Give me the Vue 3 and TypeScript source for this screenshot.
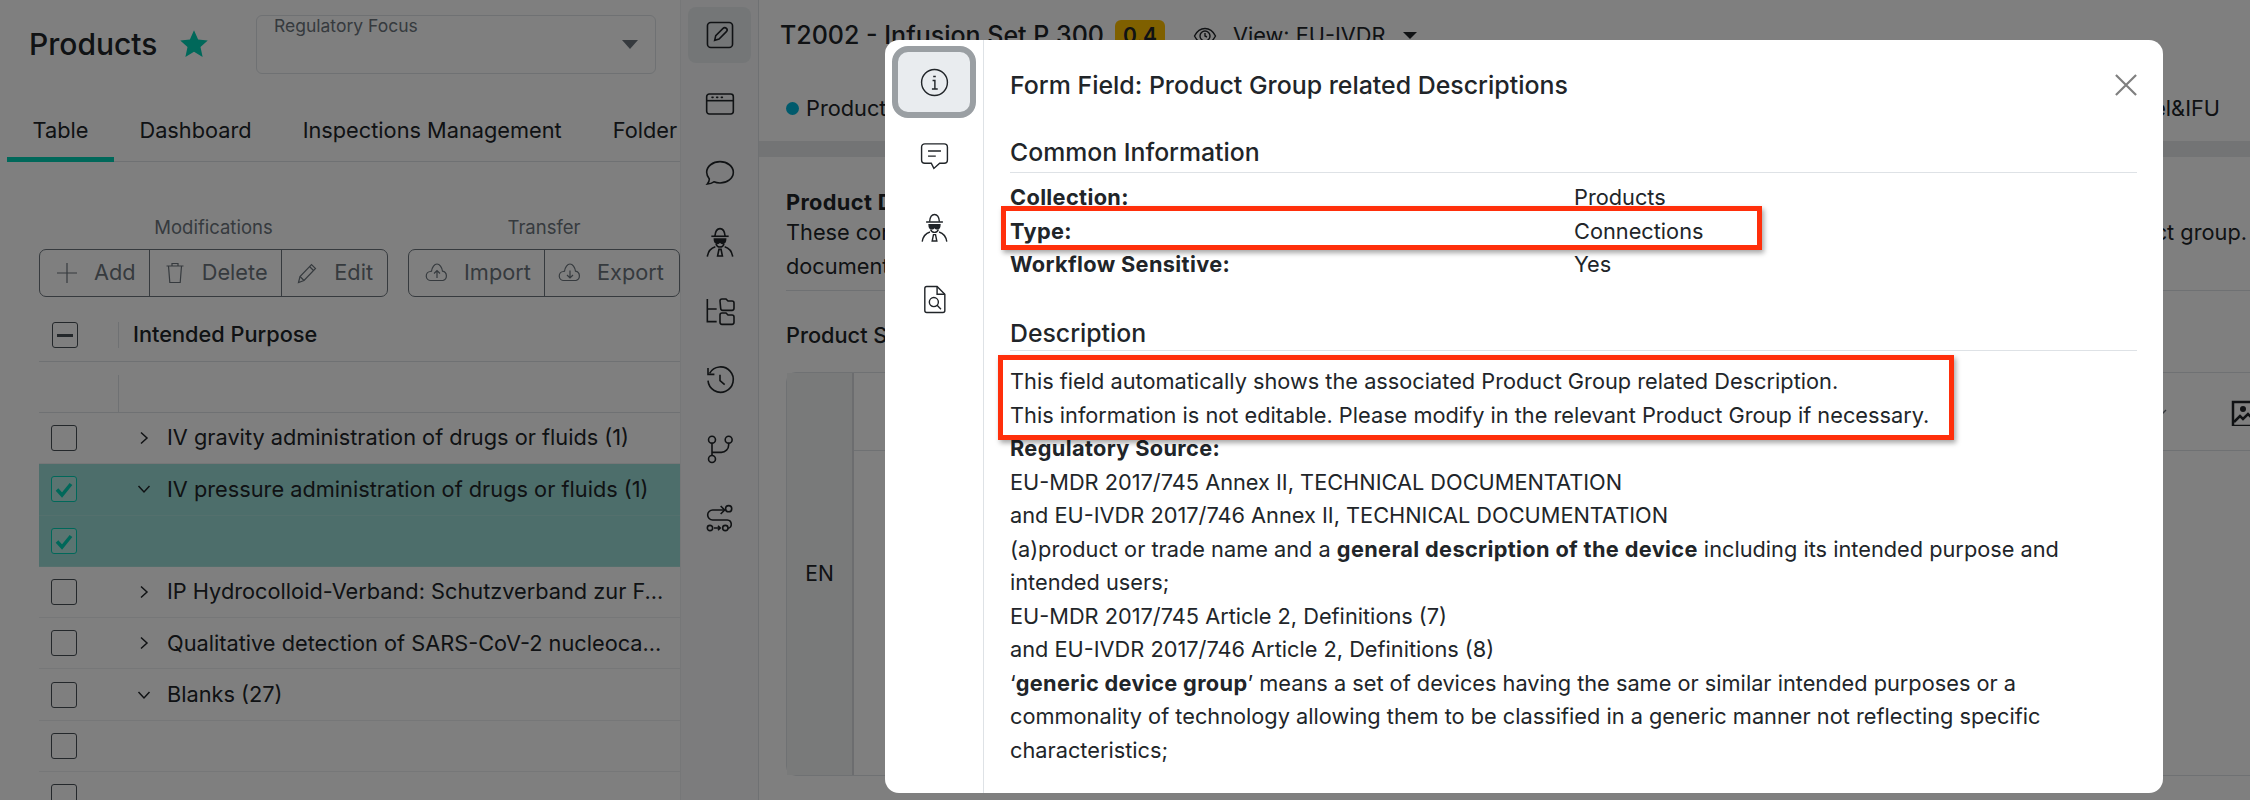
<script setup lang="ts">
const icons: Record<string, string> = {
  edit: '<rect x="2.600" y="2.600" width="18.800" height="18.800" rx="2.500"/><path d="M8 16l.8-3.500 5.500-5.500a1.600 1.600 0 0 1 2.500 2.500l-5.500 5.500z"/>',
  browser: '<rect x="2" y="4.500" width="20" height="15" rx="2"/><path d="M2 9.500h20"/><path d="M6 7h.8M9.500 7h.8M13 7h.8" stroke-linecap="round"/>',
  chat: '<path d="M12 3.500c5.500 0 10 3.500 10 8s-4.500 8-10 8c-1.700 0-3.200-.3-4.600-.9-1.400 1-3 1.500-4.900 1.700 1-1.200 1.500-2.500 1.500-3.800C2.800 15 2 13.300 2 11.500c0-4.500 4.500-8 10-8z"/>',
  spy: '<path d="M8.200 7.500c.3-3.500 1.600-5.500 3.800-5.500s3.500 2 3.800 5.500"/><path d="M5.500 7.700h13"/><path d="M7.800 9.800h8.400c0 2.300-1 3.200-2.300 3.200-1 0-1.300-.9-1.900-.9s-.9.900-1.900.9c-1.300 0-2.300-.9-2.300-3.200z" fill="currentColor"/><path d="M9 13.500c.5 1.500 1.600 2.300 3 2.300s2.500-.8 3-2.300"/><path d="M8.500 15.500C5 16.500 3 19.500 2.500 23M15.500 15.500c3.500 1 5.500 4 6 7.500"/><path d="M11.200 17.500h1.600l1 5h-3.600z"/>',
  tree: '<path d="M2.500 3v17h7M2.500 10.500h7"/><path d="M12 4.500a1.500 1.500 0 0 1 1.500-1.500h3l1.500 1.500h3a1.500 1.500 0 0 1 1.500 1.500v4a1.500 1.500 0 0 1-1.500 1.500h-7a1.500 1.500 0 0 1-1.500-1.500z"/><path d="M12 15a1.500 1.500 0 0 1 1.500-1.500h3L18 15h3a1.500 1.500 0 0 1 1.500 1.500v4A1.500 1.500 0 0 1 21 22h-7.500a1.500 1.500 0 0 1-1.500-1.500z"/>',
  history: '<path d="M4.200 7A9.500 9.500 0 1 1 3 12.500"/><path d="M3 3v4.800h4.800"/><path d="M12 8v4.500l3.500 3"/>',
  branch: '<circle cx="6" cy="5" r="2.600"/><circle cx="18.500" cy="5" r="2.600"/><circle cx="6" cy="19.500" r="2.600"/><path d="M6 7.600v9.300M6 14.500h7a5.500 5.500 0 0 0 5.500-5.500V7.600"/>',
  route: '<circle cx="18.500" cy="5" r="2.300"/><path d="M15 6H6.500a3.500 3.500 0 0 0 0 7.500h11a3.200 3.200 0 0 1 .5 6.300"/><path d="M12.500 3l3 3-3 3"/><circle cx="4.500" cy="19.500" r="2"/><circle cx="16" cy="19.500" r="2"/><path d="M7.500 19.500h4.500M10.500 17.800l1.700 1.700-1.700 1.700"/>',
  info: '<circle cx="12" cy="12" r="10"/><path d="M10.500 10.500H12.300V17M10 17h4.500" /><path d="M12 6.800v1.200" stroke-width="2"/>',
  note: '<path d="M4.500 3h15A2.500 2.500 0 0 1 22 5.500v10a2.500 2.500 0 0 1-2.500 2.500H16l-4.500 4-2-4h-5A2.500 2.500 0 0 1 2 15.500v-10A2.500 2.500 0 0 1 4.500 3z"/><path d="M7 8.500h10M7 12.500h6"/>',
  file: '<path d="M6 2h8l6 6v12.500a1.500 1.500 0 0 1-1.500 1.500H6a1.500 1.500 0 0 1-1.500-1.500v-17A1.500 1.500 0 0 1 6 2z"/><path d="M14 2v6h6"/><circle cx="11.500" cy="14" r="3.500"/><path d="M14 16.500l3 3"/>',
  plus: '<path d="M12 2v20M2 12h20"/>',
  trash: '<path d="M3.500 5h17M9 5V2.500h6V5M5.500 5l1.300 16.500h10.400L18.500 5"/>',
  pencil: '<path d="M3.500 21.500l1.500-6L16.500 3.500l4 4L9 19.500z"/><path d="M14.500 5.500l4 4M5 15.500l4 4"/>',
  up: '<path d="M7 19.500h-1a4.500 4.500 0 0 1-.5-9 4.500 4.500 0 0 1 1-.3C7 6 9.500 3 12 3s5 3 5.500 7.200a4.800 4.800 0 0 1 .5 9.300h-11z"/><path d="M12 17v-7M9 12.500l3-3 3 3"/>',
  down: '<path d="M7 19.500h-1a4.500 4.500 0 0 1-.5-9 4.500 4.500 0 0 1 1-.3C7 6 9.500 3 12 3s5 3 5.500 7.200a4.800 4.800 0 0 1 .5 9.300h-11z"/><path d="M12 9.500v7M9 14l3 3 3-3"/>',
  eye: '<path d="M1.500 12C4 7 7.500 4.500 12 4.500S20 7 22.500 12C20 17 16.500 19.500 12 19.500S4 17 1.500 12z"/><circle cx="12" cy="12" r="5"/><path d="M12 9v3l2 1"/>'
}
const railIcons = ['edit', 'browser', 'chat', 'spy', 'tree', 'history', 'branch', 'route']
const modalIcons = ['info', 'note', 'spy', 'file']
const tabs = ['Table', 'Dashboard', 'Inspections Management', 'Folder']
const rows = [
  { text: 'IV gravity administration of drugs or fluids (1)', chev: 'right' },
  { text: 'IV pressure administration of drugs or fluids (1)', chev: 'down', on: true },
  { text: '', chev: '', on: true },
  { text: 'IP Hydrocolloid-Verband: Schutzverband zur F...', chev: 'right' },
  { text: 'Qualitative detection of SARS-CoV-2 nucleoca...', chev: 'right' },
  { text: 'Blanks (27)', chev: 'down' },
  { text: '', chev: '' },
  { text: '', chev: '' }
]
const facts = [
  ['Collection:', 'Products'],
  ['Type:', 'Connections'],
  ['Workflow Sensitive:', 'Yes']
]
</script>

<template>
  <div class="page">
    <section class="left">
      <header class="head">
        <h1>Products</h1>
        <svg class="star" viewBox="0 0 24 24"><path d="M12 1l3.300 7.300 7.700.8-5.800 5.200 1.700 8L12 18.200 5.100 22.300l1.700-8L1 9.100l7.700-.8z" fill="currentColor"/></svg>
        <div class="select">
          <span>Regulatory Focus</span>
          <i class="caret grey"></i>
        </div>
      </header>
      <nav class="tabs">
        <span v-for="(t, i) in tabs" :key="t" class="tab" :class="{ active: i === 0 }">{{ t }}</span>
      </nav>
      <div class="tools">
        <div class="group g1">
          <div class="group-label">Modifications</div>
          <div class="btns">
            <span class="btn b-add"><svg class="bi" viewBox="0 0 24 24" v-html="icons.plus"></svg>Add</span>
            <span class="btn b-del"><svg class="bi" viewBox="0 0 24 24" v-html="icons.trash"></svg>Delete</span>
            <span class="btn b-edit"><svg class="bi" viewBox="0 0 24 24" v-html="icons.pencil"></svg>Edit</span>
          </div>
        </div>
        <div class="group g2">
          <div class="group-label">Transfer</div>
          <div class="btns">
            <span class="btn b-imp"><svg class="bi" viewBox="0 0 24 24" v-html="icons.up"></svg>Import</span>
            <span class="btn b-exp"><svg class="bi" viewBox="0 0 24 24" v-html="icons.down"></svg>Export</span>
          </div>
        </div>
      </div>
      <div class="table">
        <div class="thead">
          <span class="cb minus"><b></b></span>
          <span class="vline"></span>
          <span class="th">Intended Purpose</span>
        </div>
        <div class="tfilter"><span class="vline tall"></span></div>
        <div v-for="(r, i) in rows" :key="i" class="row" :class="{ on: r.on }">
          <span class="cb" :class="{ checked: r.on }">
            <svg v-if="r.on" viewBox="0 0 24 24"><path d="M5 12.500l5 5.500 9-11" fill="none" stroke="currentColor" stroke-width="3.500"/></svg>
          </span>
          <span class="chev">
            <svg v-if="r.chev" viewBox="0 0 16 16" :class="r.chev"><path d="M5 2.500L11 8l-6 5.500" fill="none" stroke="currentColor" stroke-width="1.500"/></svg>
          </span>
          <span class="cell">{{ r.text }}</span>
        </div>
      </div>
    </section>

    <aside class="rail">
      <span v-for="(n, i) in railIcons" :key="n" class="rail-btn" :class="{ active: i === 0 }">
        <svg viewBox="0 0 24 24" v-html="icons[n]"></svg>
      </span>
    </aside>

    <main class="main">
      <div class="title-row">
        <span class="doc-title">T2002 - Infusion Set P 300</span>
        <span class="badge">0.4</span>
        <svg class="eye" viewBox="0 0 24 24" v-html="icons.eye"></svg>
        <span class="view">View: EU-IVDR</span>
        <i class="caret dark"></i>
      </div>
      <div class="doc-tabs">
        <span class="dot"></span>
        <span class="doc-tab">Product Description</span>
        <span class="doc-end">Label&amp;IFU</span>
      </div>
      <div class="strip"></div>
      <div class="doc">
        <div class="doc-intro">
          <strong>Product Description</strong>
          <p class="wide"><span>These connections</span><span>of the selected product group.</span></p>
          <p>documentation</p>
        </div>
        <h3>Product Summary</h3>
        <div class="doc-table">
          <div class="lang">EN</div>
          <div class="doc-cols">
            <div class="dc-head">
              <svg class="dc-chev" viewBox="0 0 16 16"><path d="M4 10l4-4" fill="none" stroke="currentColor" stroke-width="1.500"/></svg>
              <svg class="pic" viewBox="0 0 24 24"><rect x="2" y="2" width="20" height="24" fill="none" stroke="currentColor" stroke-width="2.500"/><circle cx="12" cy="9" r="3" fill="currentColor"/><path d="M3 22l6-6 3 3 5-5 6 6" fill="none" stroke="currentColor" stroke-width="2.500"/></svg>
            </div>
          </div>
        </div>
      </div>
    </main>

    <div class="backdrop"></div>

    <div class="modal">
      <div class="m-side">
        <span v-for="(n, i) in modalIcons" :key="n" class="m-btn" :class="{ active: i === 0 }">
          <svg viewBox="0 0 24 24" v-html="icons[n]"></svg>
        </span>
      </div>
      <div class="m-main">
        <div class="m-head">
          <span class="m-title">Form Field: Product Group related Descriptions</span>
          <svg class="close" viewBox="0 0 24 24"><path d="M1 1l22 22M23 1L1 23" fill="none" stroke="currentColor" stroke-width="2.400"/></svg>
        </div>
        <h4>Common Information</h4>
        <div class="facts">
          <template v-for="f in facts" :key="f[0]">
            <strong>{{ f[0] }}</strong>
            <span>{{ f[1] }}</span>
          </template>
        </div>
        <h4 class="second">Description</h4>
        <div class="desc">
          <p>This field automatically shows the associated Product Group related Description.</p>
          <p>This information is not editable. Please modify in the relevant Product Group if necessary.</p>
          <p><strong>Regulatory Source:</strong></p>
          <p>EU-MDR 2017/745 Annex II, TECHNICAL DOCUMENTATION</p>
          <p>and EU-IVDR 2017/746 Annex II, TECHNICAL DOCUMENTATION</p>
          <p>(a)product or trade name and a <strong>general description of the device</strong> including its intended purpose and intended users;</p>
          <p>EU-MDR 2017/745 Article 2, Definitions (7)</p>
          <p>and EU-IVDR 2017/746 Article 2, Definitions (8)</p>
          <p>‘<strong>generic device group</strong>’ means a set of devices having the same or similar intended purposes or a commonality of technology allowing them to be classified in a generic manner not reflecting specific characteristics;</p>
        </div>
      </div>
      <span class="mark mark-a"></span>
      <span class="mark mark-b"></span>
    </div>
  </div>
</template>

<style scoped>
.page {
  position: relative;
  display: flex;
  width: 2250px;
  height: 800px;
  overflow: hidden;
  background: #fff;
  color: #212529;
  font-family: Inter, "Liberation Sans", sans-serif;
  font-size: 21.750px;
  line-height: 33.500px;
}
svg { display: block; fill: none; stroke: currentColor; }
p { margin: 0; }
h1, h3, h4 { margin: 0; font-weight: 500; }

.left { width: 680px; flex: none; overflow: hidden; }
.head { display: flex; align-items: flex-start; height: 97px; padding: 15px 0 0 29px; box-sizing: border-box; }
h1 { font-size: 30px; line-height: 58px; width: 150px; }
.star { width: 30px; height: 30px; margin-top: 14px; color: #00d1b4; stroke: none; flex: none; }
.select {
  display: flex; justify-content: space-between; align-items: center;
  box-sizing: border-box; width: 400px; height: 59px; margin-left: 47px;
  border: 1px solid #dee2e6; border-radius: 6px; padding: 0 17px;
  color: #6c757d; font-size: 17.500px;
}
.select span { align-self: flex-start; line-height: 20px; }
.caret { display: block; width: 0; height: 0; border-left: 8px solid transparent; border-right: 8px solid transparent; }
.caret.grey { border-top: 9px solid #6c757d; margin-top: -1px; }
.caret.dark { border-left-width: 7px; border-right-width: 7px; border-top: 7px solid #212529; margin-left: 17px; }

.tabs { display: flex; height: 65px; margin-left: 7px; border-bottom: 1px solid #dee2e6; box-sizing: border-box; white-space: nowrap; width: 673px; }
.tab { height: 64px; padding: 17px 25.500px 0; box-sizing: border-box; line-height: 32px; }
.tab.active { border-bottom: 5px solid #00d1b4; height: 65px; }

.tools { display: flex; padding: 52px 0 0 39px; gap: 20px; height: 135px; box-sizing: border-box; white-space: nowrap; }
.group-label { text-align: center; font-size: 18.500px; color: #6c757d; line-height: 26px; height: 35px; }
.btns { display: flex; height: 48px; border: 1px solid #6c757d; border-radius: 7px; box-sizing: border-box; }
.btn { display: flex; align-items: center; box-sizing: border-box; color: #6c757d; border-left: 1px solid #6c757d; padding-left: 13px; }
.btn:first-child { border-left: 0; }
.bi { width: 24px; height: 26px; margin-right: 15px; stroke-width: 1.200; flex: none; }
.g1 { width: 349px; }
.g2 { width: 272px; }
.b-add { width: 109px; padding-left: 15px; }
.b-del { width: 133px; }
.b-edit { width: 106px; }
.b-imp { width: 135px; padding-left: 16px; }
.b-exp { width: 135px; }

.table { margin-left: 39px; }
.thead { display: flex; align-items: center; height: 65px; padding-top: 12px; border-bottom: 1px solid #dee2e6; box-sizing: border-box; }
.th { margin-left: 14px; font-weight: 500; }
.cb {
  flex: none; display: block; box-sizing: border-box; width: 26px; height: 26px; margin-left: 12px;
  border: 1px solid #495057; border-radius: 3px; background: #fff; color: #00d1b4;
}
.cb.minus { margin-left: 13px; display: flex; align-items: center; justify-content: center; }
.cb.minus b { display: block; width: 16px; height: 3px; background: #495057; }
.cb.checked { border-color: #00d1b4; background: #b4e8e2; }
.vline { display: block; width: 1px; height: 26px; margin-left: 40px; background: #dee2e6; flex: none; }
.tfilter { height: 51px; border-bottom: 1px solid #dee2e6; box-sizing: border-box; padding-top: 13px; }
.vline.tall { height: 38px; margin-left: 79px; }
.row { display: flex; align-items: center; height: 51.300px; border-bottom: 1px solid #eceef0; box-sizing: border-box; white-space: nowrap; }
.row.on { background: #9bdcd6; border-bottom-color: #a9e0db; }
.chev { width: 16px; margin-left: 59px; flex: none; color: #212529; }
.chev svg { width: 16px; height: 16px; }
.chev svg.down { transform: rotate(90deg); }
.cell { margin-left: 15px; }

.rail {
  width: 79px; flex: none; box-sizing: border-box; background: #f8f9fa; border-right: 1px solid #dee2e6;
  border-left: 1px solid #eceef0;
  padding: 7px 7px 0; display: flex; flex-direction: column; gap: 13px;
}
.rail-btn { display: flex; align-items: center; justify-content: center; height: 56px; border-radius: 8px; flex: none; }
.rail-btn.active { background: #e9ecef; }
.rail-btn svg { width: 32px; height: 32px; stroke-width: 1.200; }

.main { flex: 1; min-width: 0; overflow: hidden; white-space: nowrap; }
.title-row { display: flex; align-items: center; height: 71px; padding-left: 21px; }
.doc-title { font-size: 25px; font-weight: 500; width: 335px; flex: none; }
.badge { flex: none; background: #ffc000; border-radius: 6px; font-size: 21px; font-weight: 600; width: 50px; height: 32px; line-height: 32px; text-align: center; }
.eye { width: 24px; height: 24px; margin-left: 28px; stroke-width: 1.400; flex: none; }
.view { margin-left: 16px; }
.doc-tabs { display: flex; align-items: center; height: 70px; padding: 5px 0 0 27px; box-sizing: border-box; }
.dot { width: 13px; height: 13px; border-radius: 50%; background: #00b4d8; flex: none; margin-right: 7px; }
.doc-tab { flex: 1; }
.doc-end { margin-right: 30px; }
.strip { height: 16px; background: #e6e8ea; }
.doc { padding: 30px 0 0 27px; }
.doc-intro { height: 103px; border-bottom: 1px solid #dee2e6; }
.doc-intro strong { display: block; height: 29px; line-height: 31px; }
.wide { display: flex; justify-content: space-between; width: 1461px; }
h3 { font-size: 21.750px; line-height: 33px; margin-top: 28px; height: 53px; }
.doc-table { display: flex; height: 402px; border: 1px solid #dee2e6; border-right: 0; border-radius: 10px 0 0 10px; }
.lang { width: 65px; flex: none; font-size: 21px; background: #f3f4f5; border-right: 2px solid #d8dbde; display: flex; align-items: center; justify-content: center; }
.doc-cols { flex: 1; }
.dc-head { display: flex; justify-content: flex-end; align-items: center; height: 77px; border-bottom: 1px solid #dee2e6; }
.dc-chev { width: 16px; height: 16px; color: #6c757d; margin-right: 57px; }
.pic { width: 24px; height: 28px; margin-right: -5px; stroke: none; }

.backdrop { position: absolute; inset: 0; background: rgba(0, 0, 0, .5); }

.modal {
  position: absolute; left: 885px; top: 40px; width: 1278px; height: 753px;
  display: flex; background: #fff; border-radius: 14px; overflow: hidden;
}
.m-side { width: 99px; flex: none; box-sizing: border-box; border-right: 1px solid #dee2e6; padding: 6px 0 0 7px; display: flex; flex-direction: column; }
.m-btn { display: flex; align-items: center; justify-content: center; width: 84px; height: 72px; flex: none; box-sizing: border-box; }
.m-btn.active { background: #e9ecef; border: 6px solid #9a9fa3; border-radius: 16px; margin-bottom: 1px; }
.m-btn svg { width: 31px; height: 31px; stroke-width: 1.100; color: #212529; }
.m-main { flex: 1; padding: 0 26px; min-width: 0; }
.m-head { display: flex; justify-content: space-between; align-items: center; height: 90px; }
.m-title { font-size: 24.900px; font-weight: 500; line-height: 30px; }
.close { width: 22px; height: 22px; color: #808080; }
h4 { font-size: 24.800px; line-height: 34px; height: 37px; margin-top: 5px; border-bottom: 1px solid #dee2e6; }
h4.second { margin-top: 0; padding-top: 4px; box-sizing: content-box; height: 33px; line-height: 33px; }
.facts { display: grid; grid-template-columns: 564px 1fr; grid-auto-rows: 33.500px; align-content: start; padding-top: 8px; height: 140px; box-sizing: border-box; }
.desc { padding: 14px 6px 0 0; }
strong { font-weight: 700; letter-spacing: .35px; }
.mark { position: absolute; border: 5px solid #ff2f0b; box-shadow: 2px 3px 5px rgba(0,0,0,.35); pointer-events: none; box-sizing: border-box; }
.mark-a { left: 116px; top: 166px; width: 761px; height: 44px; }
.mark-b { left: 113px; top: 315px; width: 956px; height: 85px; }
</style>
